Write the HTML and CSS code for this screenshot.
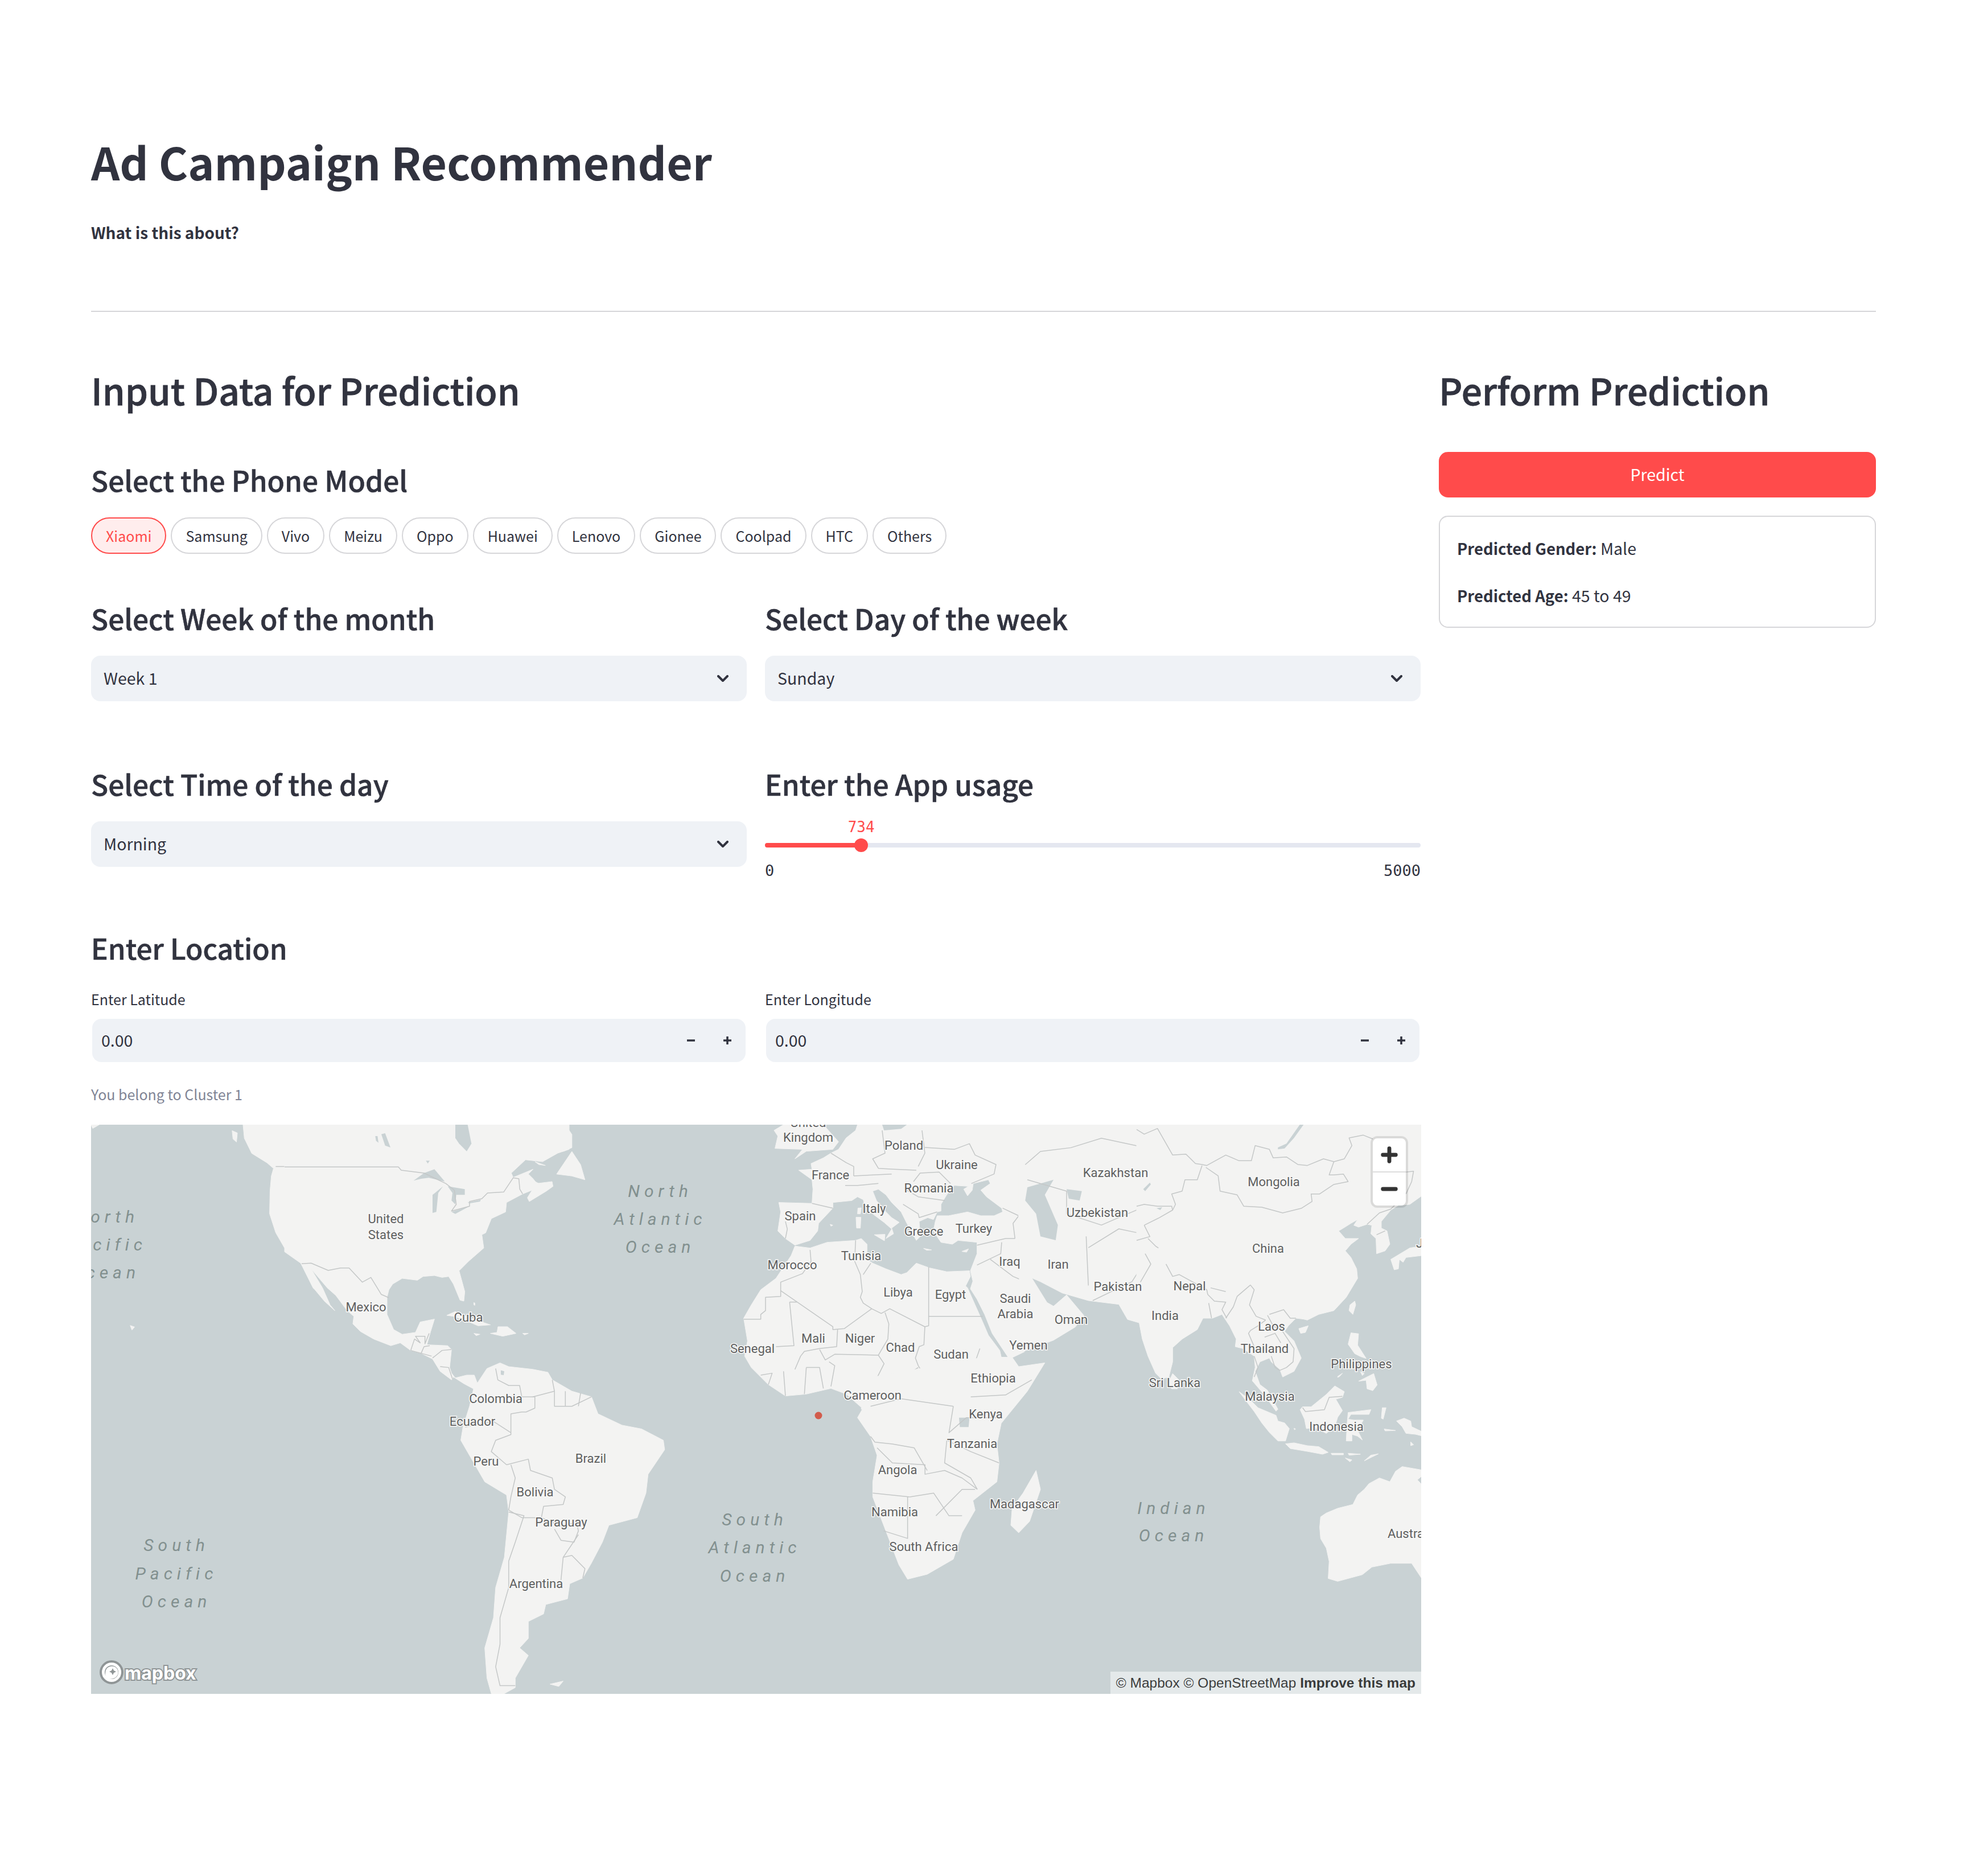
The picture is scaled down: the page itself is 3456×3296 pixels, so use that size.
FILE: index.html
```html
<!DOCTYPE html>
<html lang="en">
<head>
    <meta charset="UTF-8">
    <title>Ad Campaign Recommender</title>
    <link rel="stylesheet" href="styles.css">
</head>
<body>
    <main class="page">
        <h1 class="title">Ad Campaign Recommender</h1>
        <p class="about">What is this about?</p>
        <hr class="divider">

        <div class="layout">
            <section class="inputs">
                <h2 class="heading">Input Data for Prediction</h2>

                <h3 class="subheading phone-heading">Select the Phone Model</h3>
                <div class="chips">
                    <button class="chip chip-on">Xiaomi</button>
                    <button class="chip">Samsung</button>
                    <button class="chip">Vivo</button>
                    <button class="chip">Meizu</button>
                    <button class="chip">Oppo</button>
                    <button class="chip">Huawei</button>
                    <button class="chip">Lenovo</button>
                    <button class="chip">Gionee</button>
                    <button class="chip">Coolpad</button>
                    <button class="chip">HTC</button>
                    <button class="chip">Others</button>
                </div>

                <div class="row row-week">
                    <div>
                        <h3 class="subheading">Select Week of the month</h3>
                        <div class="select"><span>Week 1</span>
                            <svg class="chevron" viewBox="0 0 20 12"><path d="M2 2l8 8 8-8"/></svg>
                        </div>
                    </div>
                    <div>
                        <h3 class="subheading">Select Day of the week</h3>
                        <div class="select"><span>Sunday</span>
                            <svg class="chevron" viewBox="0 0 20 12"><path d="M2 2l8 8 8-8"/></svg>
                        </div>
                    </div>
                </div>

                <div class="row row-time">
                    <div>
                        <h3 class="subheading">Select Time of the day</h3>
                        <div class="select"><span>Morning</span>
                            <svg class="chevron" viewBox="0 0 20 12"><path d="M2 2l8 8 8-8"/></svg>
                        </div>
                    </div>
                    <div>
                        <h3 class="subheading">Enter the App usage</h3>
                        <div class="slider">
                            <div class="track">
                                <div class="track-fill" style="width: 14.68%"></div>
                                <div class="thumb" style="left: 14.68%"><span class="thumb-value">734</span></div>
                            </div>
                            <div class="slider-ends"><span>0</span><span>5000</span></div>
                        </div>
                    </div>
                </div>

                <h3 class="subheading location-heading">Enter Location</h3>
                <div class="row">
                    <div>
                        <label class="field-label">Enter Latitude</label>
                        <div class="number">
                            <span class="number-value">0.00</span>
                            <span class="step"><svg class="step-icon" viewBox="0 0 16 16"><path d="M1 8h14"/></svg></span>
                            <span class="step"><svg class="step-icon" viewBox="0 0 16 16"><path d="M1 8h14M8 1v14"/></svg></span>
                        </div>
                    </div>
                    <div>
                        <label class="field-label">Enter Longitude</label>
                        <div class="number">
                            <span class="number-value">0.00</span>
                            <span class="step"><svg class="step-icon" viewBox="0 0 16 16"><path d="M1 8h14"/></svg></span>
                            <span class="step"><svg class="step-icon" viewBox="0 0 16 16"><path d="M1 8h14M8 1v14"/></svg></span>
                        </div>
                    </div>
                </div>
                <p class="caption">You belong to Cluster 1</p>

                <div class="map">
                    <svg class="map-svg" viewBox="160 1976 2337 1000">
                        <rect class="water" x="160" y="1976" width="2337" height="1000"/>

                        <!-- Americas, west of 500 and South America -->
                        <g transform="translate(140 1960) scale(.7653 .6633)">
                            <g class="land">
                                <polygon points="26,24 45,24 30,34"/>
                                <polygon points="350,40 362,46 360,70 352,62"/>
                                <polygon points="375,24 378,60 395,100 430,125 445,140 440,160 437,200 436,260 450,310 470,350 505,380 510,395 510,24"/>
                                <polygon points="1115,24 1130,50 1130,85 1110,95 1060,60 1060,24"/>
                                <polygon points="905,720 915,705 935,670 965,655 985,665 1040,672 1075,680 1085,700 1130,730 1175,745 1190,790 1245,820 1290,830 1340,860 1343,885 1305,950 1300,1000 1280,1065 1215,1085 1200,1130 1175,1185 1155,1225 1125,1240 1120,1280 1070,1295 1065,1320 1030,1340 1030,1385 1010,1410 1030,1430 1000,1490 1000,1515 975,1531 945,1531 935,1490 930,1410 950,1330 955,1250 975,1170 985,1050 980,1005 930,970 905,920 875,860 880,825 895,770"/>
                                <polygon points="1095,155 1130,95 1150,130 1160,170 1130,160"/>
                                <polygon points="1080,1506 1110,1498 1100,1512"/>
                                <polygon points="116,556 126,560 120,568"/>
                            </g>
                            <g class="border">
                                <polyline points="450,135 510,135"/>
                                <polyline points="955,670 960,700 985,715 1010,715 1015,745 1045,745 1045,775 1025,785 1015,785 990,790 990,845 955,860 945,890 980,925"/>
                                <polyline points="885,825 950,810 990,840"/>
                                <polyline points="1085,700 1090,730 1040,745"/>
                                <polyline points="1090,730 1090,770 1130,770 1175,745"/>
                                <polyline points="1115,730 1115,770"/>
                                <polyline points="1150,735 1145,770"/>
                                <polyline points="980,925 1030,910 1035,940 1085,960 1090,990 1115,1010 1110,1030 1065,1035 1060,1065 1015,1065 985,1045"/>
                                <polyline points="990,925 1000,960 990,1010 985,1045"/>
                                <polyline points="1060,1065 1110,1090 1140,1075 1145,1100 1135,1130 1105,1125 1090,1095"/>
                                <polyline points="985,1050 1020,1060 1000,1130 985,1180 985,1250 965,1330 965,1400 955,1460 965,1510 1000,1510"/>
                                <polyline points="1145,1110 1110,1170 1105,1230"/>
                                <polyline points="1110,1170 1130,1165 1160,1200 1155,1225"/>
                            </g>
                        </g>

                        <!-- North and Central America -->
                        <g transform="translate(500 1976) scale(.3333)">
                            <g class="land">
                                <polygon points="0,0 1500,0 1500,130 1440,150 1360,195 1270,185 1195,255 1205,278 1310,235 1285,260 1310,285 1330,310 1410,300 1415,325 1380,350 1290,405 1280,385 1305,345 1255,365 1170,410 1165,460 1090,495 1060,570 1040,580 1050,650 970,720 920,770 950,880 945,930 925,925 890,840 865,800 830,805 790,795 730,800 700,820 620,810 570,840 550,870 540,910 540,1000 575,1080 620,1105 690,1095 715,1040 790,1025 770,1090 750,1160 860,1165 880,1185 870,1280 880,1310 900,1335 960,1320 1000,1320 1015,1360 1060,1400 1010,1400 945,1365 890,1330 880,1345 820,1300 780,1235 720,1205 665,1190 610,1150 560,1165 470,1130 400,1090 360,1050 365,1010 330,980 270,900 225,860 140,760 200,860 240,950 265,980 210,930 160,870 150,860 85,730 0,670"/>
                                <polygon points="1320,195 1375,215 1340,210"/>
                                <polygon points="1320,300 1360,320 1340,325"/>
                                <polygon points="855,1005 900,985 960,1010 1040,1040 1085,1055 1020,1060 950,1030 890,1010"/>
                                <polygon points="998,1100 1030,1105 1010,1112"/>
                                <polygon points="1085,1100 1120,1095 1125,1065 1175,1065 1220,1100 1150,1115"/>
                                <polygon points="1255,1100 1285,1100 1265,1108"/>
                                <polygon points="997,938 1003,940 1003,952 998,950"/>
                            </g>
                            <g class="lake">
                                <polygon points="900,0 965,0 985,100 960,140 920,100 900,70"/>
                                <polygon points="510,50 530,45 558,120 530,110"/>
                                <polygon points="478,60 490,60 495,95 482,85"/>
                                <polygon points="745,190 765,190 755,205"/>
                                <polygon points="680,295 735,255 790,235 845,300 760,280 720,285"/>
                                <polygon points="780,370 835,325 810,360 800,460 780,465"/>
                                <polygon points="860,325 950,340 950,370 905,370 900,420 880,400 885,360"/>
                                <polygon points="880,460 975,430 900,470"/>
                                <polygon points="965,410 1035,395 1030,405 975,415"/>
                                <polygon points="1140,1295 1158,1300 1155,1320 1140,1318"/>
                            </g>
                            <g class="border">
                                <polyline points="0,223 600,223 615,240 735,255 850,310 895,345 905,420 880,455 975,430 975,405 1040,390 1070,360 1155,355 1205,280 1235,285 1240,340 1255,365"/>
                                <polyline points="90,733 140,730 230,768 295,755 340,755 410,830 455,805 510,895 550,912"/>
                                <polyline points="665,1190 685,1130 715,1150 690,1115 740,1115 740,1155 762,1100"/>
                                <polyline points="665,1190 720,1205 735,1170 765,1165"/>
                                <polyline points="720,1205 775,1220"/>
                                <polyline points="780,1230 830,1190 880,1185"/>
                                <polyline points="820,1275 865,1280 885,1340"/>
                            </g>
                        </g>

                        <!-- Europe and north Africa -->
                        <g transform="translate(1300 1976) scale(.3333)">
                            <g class="land">
                                <polygon points="620,0 1500,0 1500,1197 1420,1235 1330,1100 1290,1000 1250,920 1215,865 1228,825 1215,770 1250,680 1250,620 1150,610 1120,630 1060,620 1020,560 1030,510 1040,480 1100,480 1150,470 1200,460 1270,480 1340,480 1385,460 1380,440 1300,380 1270,345 1320,310 1310,290 1230,310 1225,345 1200,375 1180,340 1205,325 1130,320 1090,370 1060,420 1060,455 1040,460 1020,500 990,490 945,510 950,590 930,610 880,520 850,460 800,410 770,370 730,340 700,350 720,400 770,460 800,490 840,515 800,545 810,575 770,600 800,550 760,515 700,470 660,430 650,395 620,380 590,400 490,410 490,440 415,520 410,560 370,610 290,635 240,600 200,560 215,460 205,410 380,415 385,340 380,290 310,240 380,235 375,205 440,175 480,150 520,130 560,70 610,30"/>
                                <polygon points="290,640 270,690 190,810 110,870 60,950 20,1020 40,1140 25,1220 60,1280 100,1320 150,1370 240,1430 350,1420 480,1390 560,1420 640,1490 640,1500 1380,1500 1440,1340 1450,1290 1420,1250 1390,1280 1370,1190 1310,1110 1280,1040 1240,950 1200,860 1190,850 1215,800 1210,770 1090,775 1000,755 930,730 880,780 850,790 770,760 700,730 670,710 670,630 640,600 610,610 460,620 370,650"/>
                                <polygon points="230,0 440,0 520,90 490,130 350,140 290,180 330,130 185,125 200,60 180,30"/>
                                <polygon points="968,652 1010,660 985,662"/>
                                <polygon points="1170,668 1205,655 1195,672"/>
                                <polygon points="612,488 638,488 635,545 615,545"/>
                                <polygon points="622,440 640,438 635,470 620,470"/>
                                <polygon points="708,580 765,578 762,612"/>
                                <polygon points="476,525 490,530 480,535"/>
                            </g>
                            <g class="lake">
                                <polygon points="750,0 880,0 850,22 760,30"/>
                            </g>
                            <g class="border">
                                <polyline points="240,510 250,550 240,600"/>
                                <polyline points="370,660 375,720 330,785 215,830 215,905 135,910 135,980 110,1000 110,1025 20,1025"/>
                                <polyline points="215,875 440,1030 490,1065 490,1080 550,1075 695,970 745,995 790,970 975,1065 995,1060 995,750"/>
                                <polyline points="995,1010 1280,1010"/>
                                <polyline points="610,610 605,720 635,790 645,880 635,910 650,940 695,970"/>
                                <polyline points="690,730 650,790"/>
                                <polyline points="262,935 300,935"/>
                                <polyline points="262,935 285,1165 190,1170"/>
                                <polyline points="515,1080 510,1170 420,1180 340,1195 320,1220 290,1290"/>
                                <polyline points="420,1185 450,1240 500,1210 730,1215 780,1130 785,1050 765,990"/>
                                <polyline points="975,1065 970,1160 945,1170 925,1230 940,1270 965,1310"/>
                                <polyline points="730,1215 760,1260 700,1380 640,1410"/>
                                <polyline points="940,1280 880,1320 780,1360 750,1400"/>
                                <polyline points="965,1310 1050,1300 1180,1260 1210,1300"/>
                                <polyline points="1265,1180 1230,1280 1205,1300 1210,1380"/>
                                <polyline points="110,1320 170,1310 150,1370"/>
                                <polyline points="230,1300 240,1430"/>
                                <polyline points="350,1280 340,1420"/>
                                <polyline points="350,1280 420,1280 440,1390"/>
                                <polyline points="480,1380 500,1270 470,1250"/>
                                <polyline points="380,415 490,440"/>
                                <polyline points="480,150 560,200 600,220 600,270"/>
                                <polyline points="600,270 800,260"/>
                                <polyline points="750,30 765,150 700,180 730,230 810,235 930,240"/>
                                <polyline points="960,30 975,150 940,220"/>
                                <polyline points="975,120 1130,130 1210,100 1240,160 1350,210 1340,260 1220,310"/>
                                <polyline points="915,300 950,255 1050,250 1110,310"/>
                                <polyline points="870,340 940,380 1080,400"/>
                                <polyline points="555,320 620,320 730,310"/>
                                <polyline points="860,420 940,470 945,490 1040,460"/>
                                <polyline points="1250,635 1400,600 1450,600"/>
                                <polyline points="1380,620 1375,680 1250,740"/>
                                <polyline points="1320,710 1440,800 1500,825"/>
                                <polyline points="1450,600 1440,520 1470,480 1385,440"/>
                            </g>
                        </g>

                        <!-- Middle East and the south of Africa -->
                        <g transform="translate(1300 1960) scale(.7653 .6633)">
                            <g class="land">
                                <polygon points="270,700 285,770 270,800 300,850 315,900 305,970 305,1010 335,1100 365,1190 385,1228 430,1215 490,1175 510,1105 540,1045 535,1020 590,970 595,920 590,870 600,815 660,730 700,655 640,665 625,640 560,640"/>
                                <polygon points="680,940 690,990 665,1075 640,1105 622,1085 625,1040 650,1000"/>
                                <polygon points="640,24 920,24 920,550 890,540 870,500 800,490 740,470 690,440 670,430 705,495 720,505 750,475 790,530 770,560 720,595 650,625 640,400"/>
                            </g>
                            <g class="lake">
                                <polygon points="660,190 720,170 700,210 730,290 725,330 690,320 680,260 655,225"/>
                                <polygon points="750,195 785,200 780,225 755,220"/>
                                <polygon points="503,800 527,800 525,825 505,825"/>
                            </g>
                            <g class="border">
                                <polyline points="655,130 690,95 760,85 830,60 911,80"/>
                                <polyline points="660,170 750,200 750,260"/>
                                <polyline points="750,260 830,290 870,270 911,250"/>
                                <polyline points="810,490 900,440 950,350"/>
                                <polyline points="795,320 800,450"/>
                                <polyline points="800,350 870,300 911,310"/>
                                <polyline points="315,880 350,920 425,925 425,950 470,940 510,960 545,990"/>
                                <polyline points="305,1000 390,1010"/>
                                <polyline points="385,1010 385,1120 330,1100"/>
                                <polyline points="390,1010 445,1000 480,1060 510,1060"/>
                                <polyline points="475,860 530,890 595,920"/>
                                <polyline points="490,770 480,840 520,800 600,800"/>
                                <polyline points="490,770 370,750 300,770"/>
                                <polyline points="300,850 310,865 350,870 400,880 430,940"/>
                                <polyline points="530,745 610,740 670,700"/>
                                <polyline points="475,860 470,920 530,960 545,990"/>
                                <polyline points="450,1060 510,990 540,990"/>
                            </g>
                        </g>

                        <!-- East and south Asia -->
                        <g transform="translate(1997 1976) scale(.3333)">
                            <g class="land">
                                <polygon points="0,0 1503,0 1503,375 1440,420 1380,425 1340,450 1290,510 1290,545 1320,560 1335,630 1310,665 1265,680 1262,600 1235,575 1240,530 1215,525 1170,540 1145,530 1165,500 1130,520 1090,545 1065,560 1100,600 1170,600 1130,630 1100,665 1130,700 1160,760 1165,810 1105,910 1040,980 960,1000 900,1030 880,1025 840,1020 800,1060 780,1090 830,1140 868,1230 830,1300 770,1330 755,1290 710,1250 700,1230 650,1250 625,1300 650,1370 690,1400 745,1500 735,1510 670,1420 610,1350 625,1280 620,1220 560,1180 520,1170 525,1130 490,1060 470,1030 450,1000 400,1020 350,1020 320,1080 240,1130 190,1175 190,1250 170,1330 130,1340 100,1310 60,1220 30,1130 10,1025 0,1010"/>
                                <polygon points="855,1075 905,1060 890,1095 865,1100"/>
                                <polygon points="1150,930 1155,950 1140,1000 1120,980 1125,950"/>
                                <polygon points="1340,710 1440,650 1503,640 1503,690 1420,700 1405,725 1385,710 1380,760 1358,765"/>
                            </g>
                            <g class="lake">
                                <polygon points="860,0 880,0 830,70 780,125 745,130 745,120 790,100"/>
                                <polygon points="35,340 70,305 75,315 45,350"/>
                                <polygon points="105,440 135,435 125,450"/>
                            </g>
                            <g class="border">
                                <polyline points="0,25 40,50 110,20 190,160 260,155 310,205 345,210"/>
                                <polyline points="345,215 320,290 255,290 240,350 185,365 205,420 190,450 120,490 40,530"/>
                                <polyline points="345,210 370,215 470,160 540,190 605,190 625,110 700,130 720,175 790,170 850,210 900,215 985,180 1040,195 1095,180 1135,110 1120,70 1195,55 1245,75"/>
                                <polyline points="365,225 430,270 440,350 530,370 565,430 660,435 770,465 870,440 925,405 920,365 965,365 1040,315 1115,300 1090,260 1040,265 1015,265 1040,195"/>
                                <polyline points="1420,250 1460,245 1450,300 1420,365"/>
                                <polyline points="1215,525 1280,465 1340,445 1360,425"/>
                                <polyline points="1265,580 1310,560"/>
                                <polyline points="0,430 40,420 110,430 185,430 190,450"/>
                                <polyline points="40,530 70,590 0,610"/>
                                <polyline points="60,600 100,640 115,650"/>
                                <polyline points="45,680 75,735 20,830"/>
                                <polyline points="155,735 190,800 225,790 370,870 375,895"/>
                                <polyline points="390,860 470,880"/>
                                <polyline points="600,845 620,870 595,950 630,1010 680,1030"/>
                                <polyline points="700,1000 775,975 810,1020 840,1020"/>
                                <polyline points="375,895 410,930 470,935 450,975 475,1020"/>
                                <polyline points="380,940 395,1020"/>
                                <polyline points="600,845 530,905 510,960 470,1020"/>
                                <polyline points="680,1030 640,1060 600,1085 590,1100 620,1170"/>
                                <polyline points="690,1005 720,1060 770,1090 830,1180 825,1250 790,1280 755,1295"/>
                                <polyline points="675,1120 730,1100 760,1150"/>
                                <polyline points="710,1220 730,1280 755,1295"/>
                                <polyline points="620,1220 640,1280 620,1330"/>
                            </g>
                        </g>

                        <!-- Indonesia and Australia -->
                        <g transform="translate(1997 2300) scale(.3333)">
                            <g class="land">
                                <polygon points="190,340 225,375 215,420 185,420 165,395"/>
                                <polygon points="1130,125 1170,130 1165,190 1210,260 1180,250 1150,235 1115,185"/>
                                <polygon points="1170,380 1200,365 1250,340 1268,400 1245,430 1215,420 1210,375"/>
                                <polygon points="1060,355 1085,338 1070,355 1060,360"/>
                                <polygon points="1180,330 1200,340 1190,350"/>
                                <polygon points="862,530 875,515 920,515 1000,450 1045,405 1095,435 1085,465 1050,475 1085,535 1060,570 1045,620 1000,655 940,625 895,630 885,580"/>
                                <polygon points="1115,545 1235,530 1225,555 1130,555 1115,580 1145,585 1195,585 1165,640 1190,690 1165,670 1135,660 1135,695 1105,695 1110,600"/>
                                <polygon points="540,435 600,480 640,520 735,560 745,590 780,600 805,630 785,695 745,695 700,650 660,600 620,540"/>
                                <polygon points="785,710 830,705 900,720 960,725 1010,755 980,765 900,750 810,735"/>
                                <polygon points="1025,760 1090,760 1090,768 1030,768"/>
                                <polygon points="1115,760 1180,765 1120,770"/>
                                <polygon points="1100,785 1135,795 1125,805"/>
                                <polygon points="1200,800 1235,770 1275,763 1240,780"/>
                                <polygon points="1305,632 1365,640 1310,642"/>
                                <polygon points="1295,520 1315,520 1300,580 1290,575"/>
                                <polygon points="1370,590 1410,575 1445,590 1450,620 1503,645 1503,668 1470,660 1420,655 1400,620"/>
                                <polygon points="1445,700 1460,715 1445,720"/>
                                <polygon points="830,628 838,632 832,636"/>
                                <polygon points="970,1095 1000,1075 1060,1050 1140,1030 1165,980 1200,950 1225,920 1280,890 1335,910 1365,855 1400,830 1503,848 1503,880 1480,900 1503,925 1503,1420 1450,1340 1340,1340 1240,1360 1190,1400 1060,1435 1010,1420 1015,1330 1000,1260 970,1210 965,1150"/>
                            </g>
                            <g class="border">
                                <polyline points="875,520 890,540 990,530 1015,465 1085,460"/>
                            </g>
                        </g>

                        <g class="place">
                            <text x="678" y="2141">United</text><text x="678" y="2169">States</text>
                            <text x="643" y="2296">Mexico</text><text x="823" y="2314">Cuba</text>
                            <text x="871" y="2457">Colombia</text><text x="830" y="2497">Ecuador</text>
                            <text x="854" y="2567">Peru</text><text x="1038" y="2562">Brazil</text>
                            <text x="940" y="2621">Bolivia</text><text x="986" y="2674">Paraguay</text>
                            <text x="942" y="2782">Argentina</text>
                            <text x="1420" y="1972">United</text><text x="1420" y="1998">Kingdom</text>
                            <text x="1588" y="2012">Poland</text><text x="1681" y="2046">Ukraine</text>
                            <text x="1459" y="2064">France</text><text x="1632" y="2087">Romania</text>
                            <text x="1960" y="2060">Kazakhstan</text><text x="2238" y="2076">Mongolia</text>
                            <text x="1536" y="2123">Italy</text><text x="1406" y="2136">Spain</text>
                            <text x="1928" y="2130">Uzbekistan</text><text x="1623" y="2163">Greece</text>
                            <text x="1711" y="2158">Turkey</text><text x="2228" y="2193">China</text>
                            <text x="1513" y="2206">Tunisia</text><text x="1392" y="2222">Morocco</text>
                            <text x="1774" y="2216">Iraq</text><text x="1859" y="2221">Iran</text>
                            <text x="1578" y="2270">Libya</text><text x="1670" y="2274">Egypt</text>
                            <text x="1964" y="2260">Pakistan</text><text x="2090" y="2259">Nepal</text>
                            <text x="1784" y="2281">Saudi</text><text x="1784" y="2308">Arabia</text>
                            <text x="1882" y="2318">Oman</text><text x="2047" y="2311">India</text>
                            <text x="2234" y="2330">Laos</text><text x="1429" y="2351">Mali</text>
                            <text x="1511" y="2351">Niger</text><text x="1322" y="2369">Senegal</text>
                            <text x="1582" y="2367">Chad</text><text x="2222" y="2369">Thailand</text>
                            <text x="1807" y="2363">Yemen</text><text x="1671" y="2379">Sudan</text>
                            <text x="2392" y="2396">Philippines</text><text x="1745" y="2421">Ethiopia</text>
                            <text x="2064" y="2429">Sri Lanka</text><text x="2231" y="2453">Malaysia</text>
                            <text x="1533" y="2451">Cameroon</text><text x="1732" y="2484">Kenya</text>
                            <text x="2348" y="2506">Indonesia</text><text x="1708" y="2536">Tanzania</text>
                            <text x="1577" y="2582">Angola</text><text x="1800" y="2642">Madagascar</text>
                            <text x="1572" y="2656">Namibia</text><text x="1623" y="2717">South Africa</text>
                            <text class="from-start" x="2438" y="2694">Australia</text>
                            <text class="from-start" x="2488" y="2184">Japan</text>
                        </g>

                        <g class="ocean" transform="translate(4 -1)">
                            <text x="1156" y="2093">North</text><text x="1156" y="2142">Atlantic</text><text x="1156" y="2191">Ocean</text>
                            <text class="to-end" x="240" y="2138">North</text><text class="to-end" x="254" y="2187">Pacific</text><text class="to-end" x="242" y="2236">Ocean</text>
                            <text x="306" y="2715">South</text><text x="306" y="2765">Pacific</text><text x="306" y="2814">Ocean</text>
                            <text x="1322" y="2670">South</text><text x="1322" y="2719">Atlantic</text><text x="1322" y="2769">Ocean</text>
                            <text x="2058" y="2650">Indian</text><text x="2058" y="2698">Ocean</text>
                        </g>

                        <circle class="marker" cx="1438" cy="2487" r="6.5"/>

                        <!-- mapbox mark -->
                        <circle class="logo-ring" cx="196" cy="2938" r="19"/>
                        <circle class="logo-disc" cx="196" cy="2938" r="12"/>
                        <path class="logo-pin" d="M186 2950c-1-8-2-14 2-19 4-4 11-5 16-1 4 4 5 11 1 15-4 5-11 5-19 5z"/>
                        <path class="logo-star" d="M198 2931l2 4 4 2-4 2-2 4-2-4-4-2 4-2z"/>
                        <text class="logo-word" x="219" y="2951">mapbox</text>
                    </svg>

                    <div class="zoom">
                        <span class="zoom-btn zoom-plus"><svg class="zoom-icon" viewBox="0 0 24 24"><path d="M3 12h18M12 3v18"/></svg></span>
                        <span class="zoom-btn"><svg class="zoom-icon" viewBox="0 0 24 24"><path d="M3 12h18"/></svg></span>
                    </div>
                    <div class="attribution">© Mapbox © OpenStreetMap <b>Improve this map</b></div>
                </div>
            </section>

            <aside class="predict">
                <h2 class="heading">Perform Prediction</h2>
                <button class="predict-btn">Predict</button>
                <div class="result">
                    <p><b>Predicted Gender:</b> Male</p>
                    <p><b>Predicted Age:</b> 45 to 49</p>
                </div>
            </aside>
        </div>
    </main>
</body>
</html>
```

FILE: styles.css
```css
/* Reset */
body, h1, h2, h3, p, hr {
    margin: 0;
    padding: 0;
}

body {
    font-family: "Noto Sans CJK SC", "Noto Sans", sans-serif;
    font-size: 28.5px;
    background-color: #ffffff;
    color: #31333f;
    height: 3296px;
    overflow: hidden;
}

.page {
    padding: 230px 160px 0;
}

/* Header */
.title {
    font-size: 78.5px;
    line-height: 106px;
    font-weight: 700;
}

.about {
    margin-top: 52px;
    font-size: 28px;
    line-height: 40px;
    font-weight: 700;
}

.divider {
    border: none;
    height: 2px;
    margin-top: 118px;
    background-color: #d6d6d9;
}

.layout {
    display: grid;
    grid-template-columns: 2337px 1fr;
    column-gap: 31px;
}

/* Headings */
.heading {
    margin-top: 93px;
    font-size: 64px;
    line-height: 86px;
    font-weight: 500;
    -webkit-text-stroke: 0.8px #31333f;
}

.subheading {
    font-size: 49.6px;
    line-height: 68px;
    font-weight: 500;
    -webkit-text-stroke: 0.6px #31333f;
}

.phone-heading {
    margin-top: 81px;
}

.location-heading {
    margin-top: 107px;
}

/* Phone chips */
.chips {
    display: flex;
    gap: 8px;
    margin-top: 33px;
}

.chip {
    height: 64px;
    padding: 0 24px;
    font-family: inherit;
    font-size: 25px;
    color: #31333f;
    background-color: #ffffff;
    border: 2px solid #d6d6d9;
    border-radius: 32px;
}

.chip-on {
    color: #ff4b4b;
    background-color: #ffeded;
    border-color: #ff4b4b;
}

/* Rows of two */
.row {
    display: grid;
    grid-template-columns: 1152px 1152px;
    column-gap: 32px;
}

.row-week {
    margin-top: 78px;
}

.row-time {
    margin-top: 110px;
}

.select {
    display: flex;
    align-items: center;
    justify-content: space-between;
    height: 80px;
    margin-top: 33px;
    padding: 0 32px 0 22px;
    background-color: #eff2f6;
    border-radius: 16px;
}

.select span {
    padding-bottom: 3px;
}

.chevron {
    width: 20px;
    height: 12px;
    fill: none;
    stroke: #31333f;
    stroke-width: 4;
    stroke-linecap: round;
    stroke-linejoin: round;
}

/* Slider */
.slider {
    box-sizing: border-box;
    height: 113px;
    padding-top: 71px;
}

.track {
    position: relative;
    height: 8px;
    background-color: #e4e7f0;
    border-radius: 4px;
}

.track-fill {
    height: 8px;
    background-color: #ff4b4b;
    border-radius: 4px;
}

.thumb {
    position: absolute;
    top: -8px;
    width: 24px;
    height: 24px;
    margin-left: -12px;
    background-color: #ff4b4b;
    border-radius: 50%;
}

.thumb-value {
    position: absolute;
    left: 50%;
    bottom: 28px;
    transform: translateX(-50%);
    font-family: "DejaVu Sans Mono", monospace;
    font-size: 26px;
    line-height: 32px;
    color: #ff4b4b;
}

.slider-ends {
    display: flex;
    justify-content: space-between;
    margin-top: 25px;
    font-family: "DejaVu Sans Mono", monospace;
    font-size: 27px;
    line-height: 32px;
}

/* Number inputs */
.field-label {
    display: block;
    margin-top: 37px;
    font-size: 25px;
    line-height: 40px;
}

.number {
    display: flex;
    align-items: center;
    height: 76px;
    margin: 15px 2px 0;
    padding: 0 0 0 16px;
    background-color: #eff2f6;
    border-radius: 16px;
}

.number-value {
    flex: 1;
    padding-bottom: 3px;
}

.step {
    display: flex;
    align-items: center;
    justify-content: center;
    width: 64px;
}

.step-icon {
    width: 16px;
    height: 16px;
    fill: none;
    stroke: #31333f;
    stroke-width: 3.5;
}

.caption {
    margin-top: 36px;
    font-size: 25px;
    line-height: 40px;
    color: #808495;
}

/* Map */
.map {
    position: relative;
    width: 2337px;
    height: 1000px;
    margin-top: 34px;
    overflow: hidden;
}

.map-svg {
    display: block;
    width: 2337px;
    height: 1000px;
}

.water {
    fill: #c9d2d4;
}

.land polygon {
    fill: #f3f3f2;
    stroke: #f3f3f2;
    stroke-width: 1;
    vector-effect: non-scaling-stroke;
}

.lake polygon {
    fill: #c9d2d4;
}

.border polyline {
    fill: none;
    stroke: #c4c7c7;
    stroke-width: 1.5;
    stroke-linejoin: round;
    vector-effect: non-scaling-stroke;
}

.place text {
    font-family: Roboto, sans-serif;
    font-size: 22px;
    fill: #5e5f60;
    stroke: #f7f7f6;
    stroke-width: 3px;
    paint-order: stroke;
    text-anchor: middle;
    dominant-baseline: central;
}

.place .from-start {
    text-anchor: start;
}

.ocean text {
    font-family: Roboto, sans-serif;
    font-size: 30px;
    font-style: italic;
    letter-spacing: 8px;
    fill: #82908f;
    text-anchor: middle;
    dominant-baseline: central;
}

.ocean .to-end {
    text-anchor: end;
}

.marker {
    fill: #d25c4c;
}

.logo-ring {
    fill: #ffffff;
    stroke: #8f9596;
    stroke-width: 4;
}

.logo-disc {
    fill: #8f9596;
}

.logo-pin {
    fill: #ffffff;
}

.logo-star {
    fill: #8f9596;
}

.logo-word {
    font-family: Inter, sans-serif;
    font-size: 32px;
    font-weight: 700;
    fill: #ffffff;
    stroke: #8f9596;
    stroke-width: 4px;
    paint-order: stroke;
}

.zoom {
    position: absolute;
    top: 24px;
    right: 27px;
    display: flex;
    flex-direction: column;
    width: 58px;
    background-color: #ffffff;
    border-radius: 8px;
    box-shadow: 0 0 0 4px rgba(0, 0, 0, 0.1);
}

.zoom-btn {
    display: flex;
    align-items: center;
    justify-content: center;
    height: 58px;
}

.zoom-plus {
    border-bottom: 2px solid #dddddd;
}

.zoom-icon {
    width: 30px;
    height: 30px;
    fill: none;
    stroke: #333333;
    stroke-width: 5.5;
    stroke-linecap: round;
}

.attribution {
    position: absolute;
    right: 0;
    bottom: 0;
    padding: 0 10px;
    font-family: "Liberation Sans", sans-serif;
    font-size: 24.5px;
    line-height: 39px;
    color: rgba(0, 0, 0, 0.75);
    background-color: rgba(255, 255, 255, 0.5);
}

/* Prediction column */
.predict-btn {
    display: block;
    width: 100%;
    height: 80px;
    margin-top: 67px;
    padding-bottom: 4px;
    font-family: inherit;
    font-size: 28.5px;
    color: #ffffff;
    background-color: #ff4b4b;
    border: none;
    border-radius: 16px;
}

.result {
    box-sizing: border-box;
    height: 197px;
    margin-top: 32px;
    padding: 31px 30px;
    border: 2px solid #d6d6d9;
    border-radius: 16px;
}

.result p {
    line-height: 48px;
}

.result p + p {
    margin-top: 35px;
}

.result b {
    font-size: 27.5px;
    font-weight: 700;
}
```
